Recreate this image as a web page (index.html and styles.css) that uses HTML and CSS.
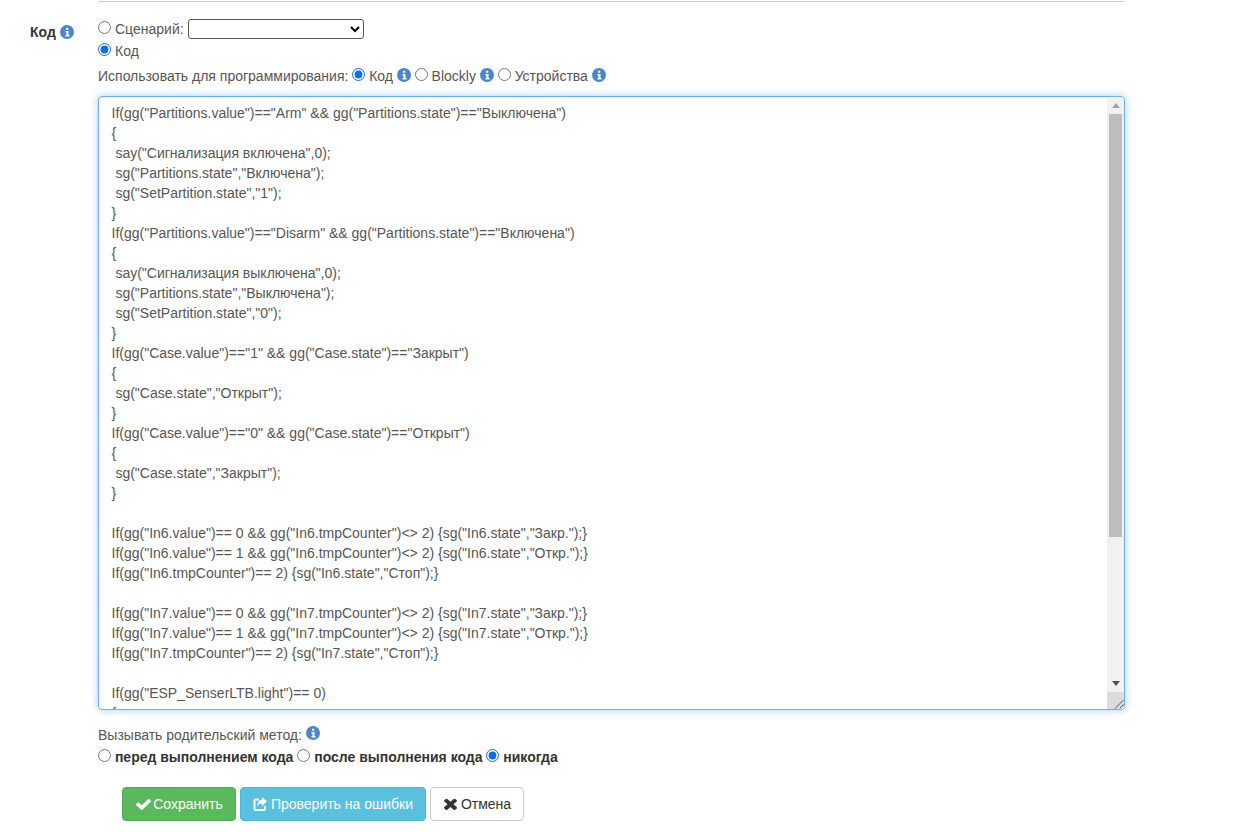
FILE: index.html
```html
<!DOCTYPE html>
<html lang="ru">
<head>
<meta charset="utf-8">
<title>Код</title>
<link rel="stylesheet" href="styles.css">
</head>
<body>
<svg class="defs" width="0" height="0" aria-hidden="true">
  <symbol id="info" viewBox="0 0 14 14"><circle cx="7" cy="7" r="7" fill="#4a86c8"/><path d="M5.500 6h3v4h1v1.500h-4V10h1V7.500h-1zM6 2.700h2.300v2H6z" fill="#fff"/></symbol>
</svg>
<div class="prev-field"></div>
<div class="row">
  <div class="label"><b>Код</b> <svg class="info"><use href="#info"/></svg></div>
  <div class="content">
    <div class="line line-first"><input class="radio" type="radio" name="src"><span>Сценарий:</span> <select class="select"><option></option></select></div>
    <div class="line"><input class="radio" type="radio" name="src" checked><span>Код</span></div>
    <div class="line line-mode">Использовать для программирования: <input class="radio radio-inline" type="radio" name="mode" checked> Код <svg class="info"><use href="#info"/></svg> <input class="radio radio-inline" type="radio" name="mode"> Blockly <svg class="info"><use href="#info"/></svg> <input class="radio radio-inline" type="radio" name="mode"> Устройства <svg class="info"><use href="#info"/></svg></div>
    <div class="code-wrap">
      <textarea class="code" spellcheck="false">If(gg("Partitions.value")=="Arm" &amp;&amp; gg("Partitions.state")=="Выключена")
{
 say("Сигнализация включена",0);
 sg("Partitions.state","Включена");
 sg("SetPartition.state","1");
}
If(gg("Partitions.value")=="Disarm" &amp;&amp; gg("Partitions.state")=="Включена")
{
 say("Сигнализация выключена",0);
 sg("Partitions.state","Выключена");
 sg("SetPartition.state","0");
}
If(gg("Case.value")=="1" &amp;&amp; gg("Case.state")=="Закрыт")
{
 sg("Case.state","Открыт");
}
If(gg("Case.value")=="0" &amp;&amp; gg("Case.state")=="Открыт")
{
 sg("Case.state","Закрыт");
}

If(gg("In6.value")== 0 &amp;&amp; gg("In6.tmpCounter")&lt;&gt; 2) {sg("In6.state","Закр.");}
If(gg("In6.value")== 1 &amp;&amp; gg("In6.tmpCounter")&lt;&gt; 2) {sg("In6.state","Откр.");}
If(gg("In6.tmpCounter")== 2) {sg("In6.state","Стоп");}

If(gg("In7.value")== 0 &amp;&amp; gg("In7.tmpCounter")&lt;&gt; 2) {sg("In7.state","Закр.");}
If(gg("In7.value")== 1 &amp;&amp; gg("In7.tmpCounter")&lt;&gt; 2) {sg("In7.state","Откр.");}
If(gg("In7.tmpCounter")== 2) {sg("In7.state","Стоп");}

If(gg("ESP_SenserLTB.light")== 0)
{
</textarea>
      <div class="scrollbar">
        <div class="sb-btn"><span class="arrow-up"></span></div>
        <div class="sb-track"><div class="sb-thumb"></div></div>
        <div class="sb-btn"><span class="arrow-down"></span></div>
        <div class="sb-corner"><svg class="grip" viewBox="0 0 17 17"><path d="M8 16.500L16.500 8M13 16l3.500-3.500"/></svg></div>
      </div>
    </div>
    <div class="parent-label">Вызывать родительский метод: <svg class="info"><use href="#info"/></svg></div>
    <div class="parent-options"><input class="radio radio-inline" type="radio" name="parent"> <b>перед выполнением кода</b> <input class="radio radio-inline" type="radio" name="parent"> <b>после выполнения кода</b> <input class="radio radio-inline" type="radio" name="parent" checked> <b>никогда</b></div>
    <div class="actions">
      <button class="btn btn-success" type="button"><svg class="ico ico-check" viewBox="120 330 1551 1192" preserveAspectRatio="none"><path d="M1671 566q0 40-28 68l-724 724-136 136q-28 28-68 28t-68-28l-136-136-362-362q-28-28-28-68t28-68l136-136q28-28 68-28t68 28l294 295 656-657q28-28 68-28t68 28l136 136q28 28 28 68z"/></svg> Сохранить</button>
      <button class="btn btn-info" type="button"><svg class="ico ico-share" viewBox="0 0 14 14"><path class="share-box" d="M6 2.500H3A1.500 1.500 0 0 0 1.500 4v7.500A1.500 1.500 0 0 0 3 13h7.500a1.500 1.500 0 0 0 1.500-1.500V9"/><path d="M9 0l5 4.500L9 9V6.500C6.500 6.500 5 7.500 4.500 9.500 4 5.500 6 3 9 2.500z"/></svg> Проверить на ошибки</button>
      <button class="btn btn-default" type="button"><svg class="ico ico-times" viewBox="110 300 1188 1260" preserveAspectRatio="none"><path d="M1298 1322q0 40-28 68l-136 136q-28 28-68 28t-68-28l-294-294-294 294q-28 28-68 28t-68-28l-136-136q-28-28-28-68t28-68l294-294-294-294q-28-28-28-68t28-68l136-136q28-28 68-28t68 28l294 294 294-294q28-28 68-28t68 28l136 136q28 28 28 68t-28 68l-294 294 294 294q28 28 28 68z"/></svg> Отмена</button>
    </div>
  </div>
</div>
</body>
</html>
```

FILE: styles.css
```css
html, body {
  margin: 0;
  padding: 0;
  background: #fff;
}
body {
  font-family: "Liberation Sans", Arial, sans-serif;
  font-size: 14px;
  line-height: 20px;
  color: #333;
  height: 833px;
  overflow: hidden;
}
.defs {
  position: absolute;
}
.prev-field {
  height: 1px;
  margin-left: 98px;
  width: 1027px;
  box-sizing: content-box;
  border-bottom: 1px solid #ccc;
  border-radius: 0 0 3px 3px;
}
.row {
  display: flex;
  padding-top: 17px;
}
.label {
  width: 98px;
  flex: none;
  box-sizing: border-box;
  padding: 3px 0 0 30px;
  color: #333;
}
.label .info {
  vertical-align: -2px;
}
.content {
  width: 1027px;
  flex: none;
}
.info {
  width: 14px;
  height: 14px;
  vertical-align: -1px;
}
.line {
  display: flex;
  align-items: center;
  height: 22px;
  color: #555;
}
.line .radio {
  align-self: flex-start;
  margin-top: 3px;
}
.line-first {
  height: 20px;
  margin-bottom: 1px;
}
.line-first .radio {
  margin-top: 2px;
}
.line-first span {
  margin-right: 4px;
}
.line-mode {
  display: block;
  height: 20px;
  margin-top: 4px;
  margin-bottom: 10px;
}
.radio {
  width: 13px;
  height: 13px;
  margin: 0 4px 0 0;
  flex: none;
  accent-color: #0f6fe8;
}
.line .radio-inline,
.radio-inline {
  margin: 0;
  vertical-align: 0;
}
.select {
  width: 176px;
  height: 20px;
  padding: 0;
  background: #fff;
  border: 1px solid #555;
  border-radius: 3px;
  font: 14px "Liberation Sans", Arial, sans-serif;
}
.code-wrap {
  position: relative;
  width: 1027px;
  height: 614px;
}
.code {
  display: block;
  width: 100%;
  height: 100%;
  margin: 0;
  box-sizing: border-box;
  padding: 6px 12px 6px 12.5px;
  border: 1px solid #6fb0e6;
  border-radius: 4px;
  outline: none;
  box-shadow: inset 0 1px 1px rgba(0, 0, 0, .075), 0 0 8px rgba(102, 175, 233, .6);
  font: 14px/20px "Liberation Sans", Arial, sans-serif;
  color: #555;
  background: #fff;
  resize: none;
  overflow: hidden;
  white-space: pre;
}
.scrollbar {
  position: absolute;
  top: 1px;
  right: 1px;
  bottom: 1px;
  width: 17px;
  display: flex;
  flex-direction: column;
  background: #f1f1f1;
  border-radius: 0 3px 3px 0;
}
.sb-btn {
  height: 17px;
  flex: none;
  display: flex;
  align-items: center;
  justify-content: center;
}
.arrow-up {
  width: 0;
  height: 0;
  border-left: 4.5px solid transparent;
  border-right: 4.5px solid transparent;
  border-bottom: 5px solid #a3a3a3;
}
.arrow-down {
  width: 0;
  height: 0;
  border-left: 4.5px solid transparent;
  border-right: 4.5px solid transparent;
  border-top: 5px solid #505050;
}
.sb-track {
  flex: 1;
}
.sb-thumb {
  height: 423px;
  margin: 0 2px;
  background: #bdbdbd;
}
.sb-corner {
  height: 17px;
  flex: none;
  background: #dcdcdc;
  border-radius: 0 0 3px 0;
}
.grip {
  display: block;
  width: 17px;
  height: 17px;
  fill: none;
  stroke: #555;
  stroke-width: 1;
}
.parent-label {
  margin-top: 15px;
  color: #555;
}
.parent-label .info {
  vertical-align: 0;
}
.parent-options {
  margin-top: 2px;
  color: #333;
}
.actions {
  display: flex;
  gap: 4px;
  margin-top: 20px;
  margin-left: 24px;
}
.btn {
  display: block;
  box-sizing: border-box;
  height: 34px;
  padding: 6px 12px;
  border: 1px solid transparent;
  border-radius: 4px;
  font: 14px/20px "Liberation Sans", Arial, sans-serif;
  white-space: nowrap;
}
.btn-success {
  width: 114px;
  color: #fff;
  background: #5cb85c;
  border-color: #4cae4c;
}
.btn-info {
  width: 186px;
  color: #fff;
  background: #5bc0de;
  border-color: #46b8da;
}
.btn-default {
  width: 94px;
  color: #333;
  background: #fff;
  border-color: #ccc;
}
.ico {
  fill: currentColor;
  vertical-align: -1px;
}
.ico-check {
  width: 15px;
  height: 11px;
  margin: 0 -2px 0 1px;
}
.ico-share {
  width: 14px;
  height: 14px;
  vertical-align: -2px;
}
.share-box {
  fill: none;
  stroke: currentColor;
  stroke-width: 2;
}
.ico-times {
  width: 13px;
  height: 12px;
  margin-left: 1px;
}
```
